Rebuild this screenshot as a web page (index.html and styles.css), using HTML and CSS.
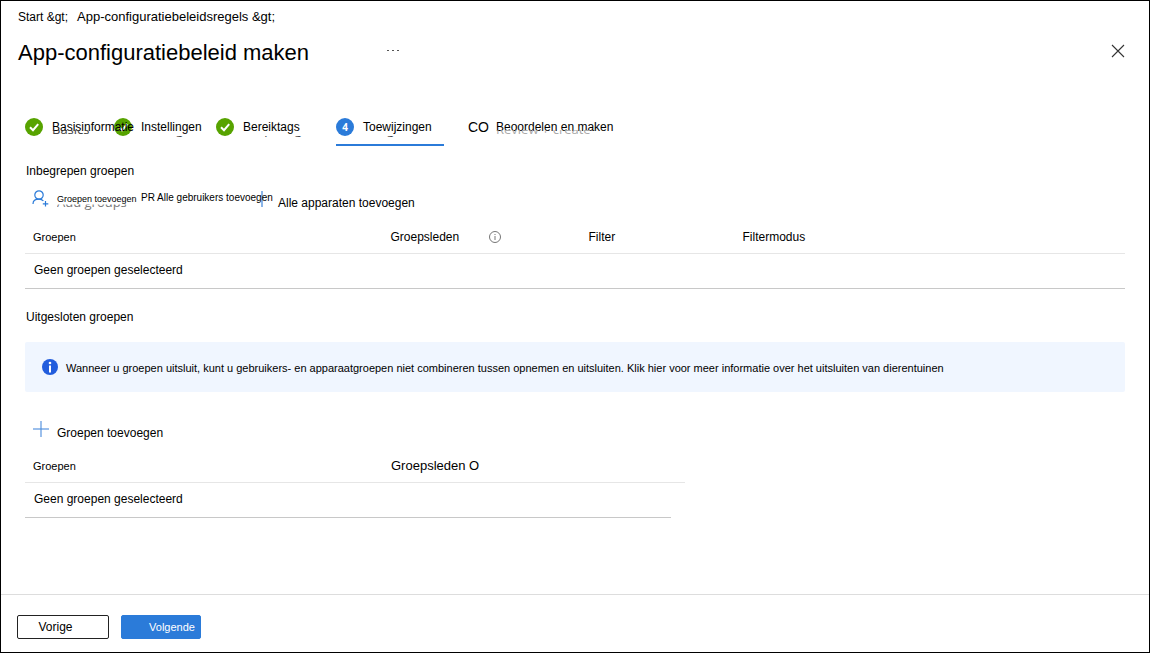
FILE: index.html
```html
<!DOCTYPE html>
<html lang="nl">
<head>
<meta charset="utf-8">
<meta name="viewport" content="width=device-width, initial-scale=1">
<title>App-configuratiebeleid maken</title>
<link rel="stylesheet" href="styles.css">
</head>
<body>
<header class="top">
  <nav class="crumbs" aria-label="Kruimelpad">
    <a class="crumb-home" href="#">Start &amp;gt;</a>
    <a href="#">App-configuratiebeleidsregels &amp;gt;</a>
  </nav>
  <div class="title-row">
    <h1>App-configuratiebeleid maken</h1>
    <button class="icon-btn" type="button" aria-label="Meer">
      <svg width="12" height="4" viewBox="0 0 12 4" fill="#555"><rect x="0" y="1" width="2" height="1"/><rect x="5" y="1" width="2" height="1"/><rect x="10" y="1" width="2" height="1"/></svg>
    </button>
    <button class="icon-btn close" type="button" aria-label="Sluiten">
      <svg width="14" height="14" viewBox="0 0 14 14" stroke="#333" stroke-width="1.1"><path d="M1 1l12 12M13 1L1 13"/></svg>
    </button>
  </div>
</header>

<main class="content">
  <nav class="steps" aria-label="Stappen">
    <a class="step" href="#">
      <svg width="18" height="18" viewBox="0 0 18 18"><circle cx="9" cy="9" r="9" fill="#57a300"/><path d="M5 9.200l3 3 5.200-6" fill="none" stroke="#fff" stroke-width="2"/></svg>
      <span class="label">Basisinformatie<span class="under mid" aria-hidden="true">Basics</span></span>
    </a>
    <a class="step" href="#">
      <svg width="18" height="18" viewBox="0 0 18 18"><circle cx="9" cy="9" r="9" fill="#57a300"/><path d="M5 9.200l3 3 5.200-6" fill="none" stroke="#fff" stroke-width="2"/></svg>
      <span class="label">Instellingen<span class="under low" aria-hidden="true">Settings</span></span>
    </a>
    <a class="step" href="#">
      <svg width="18" height="18" viewBox="0 0 18 18"><circle cx="9" cy="9" r="9" fill="#57a300"/><path d="M5 9.200l3 3 5.200-6" fill="none" stroke="#fff" stroke-width="2"/></svg>
      <span class="label">Bereiktags<span class="under low" aria-hidden="true">Scope tags</span></span>
    </a>
    <a class="step current" href="#" aria-current="step">
      <span class="badge">4</span>
      <span class="label">Toewijzingen<span class="under low" aria-hidden="true">Assignments</span></span>
    </a>
    <a class="step" href="#">
      <span class="mark">CO</span>
      <span class="label">Beoordelen en maken<span class="under mid pale" aria-hidden="true">Review + create</span></span>
    </a>
  </nav>

  <section class="included">
    <h2>Inbegrepen groepen</h2>
    <div class="toolbar">
      <button class="tool groups" type="button">
        <svg width="17" height="17" viewBox="0 0 17 17" fill="none" stroke="#2b7bd9" stroke-width="1.200"><circle cx="7" cy="5" r="4.200"/><path d="M1 14c0-3 2.600-4.800 6-4.800 1.800 0 3.300.600 4.400 1.700M13.500 11v5.500M10.800 13.800h5.500"/></svg>
        <span class="label small">Groepen toevoegen<span class="under lower" aria-hidden="true">Add groups</span></span>
      </button>
      <button class="tool users" type="button"><span class="label">PR Alle gebruikers toevoegen</span></button>
      <button class="tool plus" type="button">
        <svg width="16" height="16" viewBox="0 0 16 16" fill="#8ab4e8"><rect x="7" y="0" width="2" height="16"/></svg>
        <span class="label">Alle apparaten toevoegen</span>
      </button>
    </div>
    <table class="grid">
      <thead>
        <tr>
          <th class="c-group" scope="col">Groepen</th>
          <th class="c-members" scope="col"><span class="with-info">Groepsleden
            <svg width="12" height="12" viewBox="0 0 12 12" fill="none" stroke="#767676"><circle cx="6" cy="6" r="5.500"/><path d="M6 5v4M6 3v1"/></svg></span></th>
          <th class="c-filter" scope="col">Filter</th>
          <th scope="col">Filtermodus</th>
        </tr>
      </thead>
      <tbody><tr><td colspan="4">Geen groepen geselecteerd</td></tr></tbody>
    </table>
  </section>

  <section class="excluded">
    <h2>Uitgesloten groepen</h2>
    <div class="notice" role="note">
      <svg width="16" height="16" viewBox="0 0 16 16"><circle cx="8" cy="8" r="8" fill="#225ddd"/><circle cx="8" cy="4" r="1.300" fill="#fff"/><rect x="7" y="6.500" width="2" height="7" fill="#fff"/></svg>
      <p>Wanneer u groepen uitsluit, kunt u gebruikers- en apparaatgroepen niet combineren tussen opnemen en uitsluiten. <a href="#">Klik hier voor meer informatie over het uitsluiten van dierentuinen</a></p>
    </div>
    <button class="tool plus add" type="button">
      <svg width="16" height="16" viewBox="0 0 16 16" fill="#9bbfec"><rect x="7" y="0" width="2" height="16"/><rect x="0" y="7" width="16" height="2"/><rect x="7" y="7" width="2" height="2" fill="#6ea3e2"/></svg>
      <span class="label">Groepen toevoegen</span>
    </button>
    <table class="grid short">
      <thead>
        <tr>
          <th class="s-group" scope="col">Groepen</th>
          <th class="s-members" scope="col">Groepsleden O</th>
          <th class="s-end"></th>
        </tr>
      </thead>
      <tbody><tr><td colspan="2">Geen groepen geselecteerd</td></tr></tbody>
    </table>
  </section>
</main>

<footer class="actions">
  <button class="btn" type="button">Vorige</button>
  <button class="btn primary" type="button">Volgende</button>
</footer>
</body>
</html>
```

FILE: styles.css
```css
* { box-sizing: border-box; }

body {
  margin: 0;
  min-height: 100vh;
  display: flex;
  flex-direction: column;
  border: 1px solid #000;
  background: #fff;
  color: #000;
  font: 12px/16px "Liberation Sans", Arial, sans-serif;
}

a { color: inherit; text-decoration: none; }
svg { display: block; flex: none; }
button { font: inherit; color: inherit; cursor: pointer; }
h1, h2, p { margin: 0; font-weight: 400; }
h2 { font-size: 12px; line-height: 16px; }

.top { padding: 8px 24px 0 17px; }
.crumbs { display: flex; gap: 9px; font-size: 13px; }
.crumb-home { font-size: 12px; }

.title-row { display: flex; align-items: center; margin-top: 12px; }
h1 { font-size: 22px; line-height: 32px; }
.icon-btn { padding: 0; border: 0; background: none; }
.title-row .icon-btn { margin: 0 0 5px 78px; }
.title-row .close { margin-left: auto; }

.content { flex: 1; padding: 49px 24px 0; }

.steps {
  display: grid;
  grid-template-columns: 89px 102px 120px 132px auto;
  justify-content: start;
  white-space: nowrap;
}
.step { display: flex; align-items: center; gap: 9px; height: 28px; padding-bottom: 10px; }
.step.current { width: 108px; padding-bottom: 8px; border-bottom: 2px solid #2b7bd9; }
.badge {
  flex: none;
  width: 18px;
  border-radius: 50%;
  background: #2b7bd9;
  color: #fff;
  font: 700 10px/18px "Open Sans", sans-serif;
  text-align: center;
}
.mark { width: 19px; font-size: 14px; }

.label { position: relative; }
.under {
  position: absolute;
  left: 0;
  top: 1px;
  color: #444;
  font: 13px/18px "Open Sans", sans-serif;
  white-space: nowrap;
}
.mid { clip-path: inset(10px 0 0 0); }
.low { clip-path: inset(16px 0 0 0); }
.lower { top: 2px; clip-path: inset(12px 0 0 0); color: #777; }
.pale { color: #aaa; }

.included { padding-top: 17px; }
.included h2, .excluded h2 { padding-left: 1px; }

.tool {
  display: flex;
  align-items: center;
  gap: 8px;
  padding: 0;
  border: 0;
  background: none;
  text-align: left;
  white-space: nowrap;
}
.toolbar { display: flex; align-items: flex-start; padding: 8px 0 0 7px; }
.groups { width: 109px; margin-top: 3px; }
.users { width: 113px; margin-top: 3px; font-size: 10px; }
.small { font-size: 9px; }
.plus .label { margin-top: 8px; }

.grid { width: 100%; border-collapse: collapse; table-layout: fixed; margin-top: 10px; }
.grid th { height: 32px; padding: 0 0 0 8px; border-bottom: 1px solid #e6e6e6; font-weight: 400; text-align: left; }
.grid td { height: 35px; padding: 0 0 2px 9px; border-bottom: 1px solid #c8c8c8; }
.grid .c-group, .grid .s-group { font-size: 11px; }
.c-group { width: 32.5%; }
.c-members { width: 18%; }
.c-filter { width: 14%; }
.with-info { display: flex; align-items: center; gap: 30px; }

.excluded { padding-top: 20px; }
.notice {
  display: flex;
  align-items: center;
  gap: 8px;
  min-height: 50px;
  margin-top: 17px;
  padding: 0 17px;
  border-radius: 2px;
  background: #f0f6ff;
  font-size: 11px;
}
.notice p { padding-top: 3px; }
.add { margin: 25px 0 0 8px; }
.short { width: 60%; }
.s-group { width: 358px; }
.short .s-members { font-size: 13px; }
.s-end { width: 14px; }

.actions { display: flex; gap: 12px; padding: 20px 16px 13px; border-top: 1px solid #ddd; }
.btn { width: 92px; height: 24px; padding: 0 15px 0 0; border: 1px solid #222; border-radius: 2px; background: #fff; }
.primary { width: 80px; padding: 0 0 0 22px; border-color: #2b7bd9; background: #2b7bd9; color: #fff; font-size: 11px; }
```
